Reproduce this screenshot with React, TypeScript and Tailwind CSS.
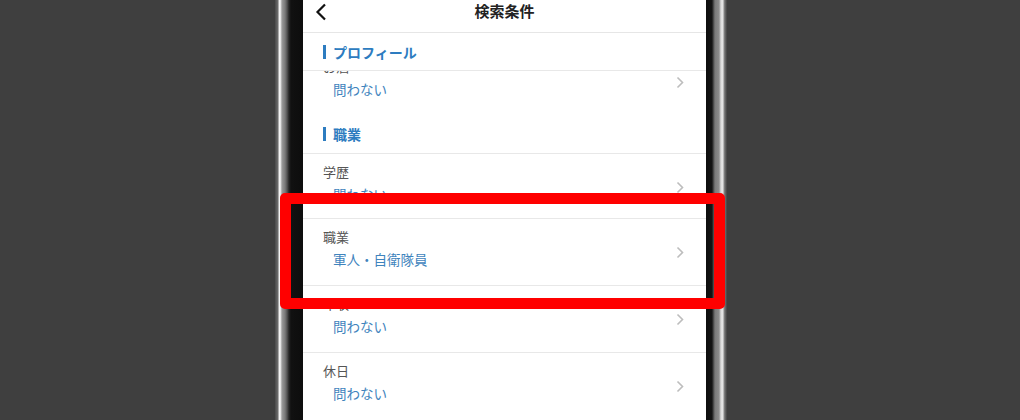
import React from 'react';

const font = { fontFamily: '"Noto Sans CJK JP", "Noto Sans", sans-serif' };

function Chevron() {
  return (
    <svg width="8" height="13" viewBox="0 0 8 13" className="shrink-0">
      <polyline points="1.5,1.5 6.5,6.5 1.5,11.5" fill="none" stroke="#bdbdbd" strokeWidth="1.6" />
    </svg>
  );
}

function Row({ label, value }: { label: string; value: string }) {
  return (
    <div className="h-[66px] flex items-start pl-[20px] pr-[22px]">
      <div className="flex-1 flex flex-col pt-[10px]">
        <span className="text-[13px] leading-[16px] text-[#555555]">{label}</span>
        <span className="mt-[5px] pl-[10px] text-[13.5px] leading-[18px] text-[#3f84bd]">{value}</span>
      </div>
      <div className="mt-[27px]">
        <Chevron />
      </div>
    </div>
  );
}

function SectionHeader({ title }: { title: string }) {
  return (
    <div className="h-[39px] shrink-0 flex items-center pl-[20px] border-b border-[#e8e8e8]">
      <div className="w-[3px] h-[14px] bg-[#2d7cc0] mr-[7px]" />
      <span className="text-[14px] font-bold text-[#2d7cc0] leading-none">{title}</span>
    </div>
  );
}

export default function App() {
  return (
    <div className="relative w-[1020px] h-[420px] bg-[#3f3f3f] overflow-hidden" style={font}>
      <div className="flex h-full ml-[275px]">
        <div className="w-[28px] h-full bg-[linear-gradient(to_right,#4a4a4a_0px,#6e6e6e_3px,#e8e8e8_4px,#ffffff_5px,#9a9a9a_7px,#7a7a7a_10px,#555555_12px,#262626_14px,#111111_16px,#0d0d0d_28px)]" />
        <div className="w-[403px] h-full bg-white flex flex-col">
          <div className="h-[33px] shrink-0 relative flex items-center justify-center border-b border-[#e6e6e6]">
            <svg width="12" height="18" viewBox="0 0 12 18" className="absolute left-[12px] top-[3px]">
              <polyline points="10,1.5 2.5,9 10,16.5" fill="none" stroke="#111111" strokeWidth="2.2" />
            </svg>
            <span className="text-[15px] font-bold text-[#222222] leading-none -mt-[11px]">検索条件</span>
          </div>
          <div className="h-[38px] shrink-0 flex items-center pl-[20px] border-b border-[#e8e8e8]">
            <div className="w-[3px] h-[14px] bg-[#2d7cc0] mr-[7px]" />
            <span className="text-[14px] font-bold text-[#2d7cc0] leading-none">プロフィール</span>
          </div>
          <div className="h-[44px] shrink-0 overflow-hidden">
            <div className="-mt-[22px]">
              <Row label="お酒" value="問わない" />
            </div>
          </div>
          <SectionHeader title="職業" />
          <div className="h-[65px] shrink-0 border-b border-[#e8e8e8]">
            <div className="h-[41px] overflow-hidden">
              <Row label="学歴" value="問わない" />
            </div>
          </div>
          <div className="shrink-0 border-b border-[#e8e8e8]">
            <Row label="職業" value="軍人・自衛隊員" />
          </div>
          <div className="shrink-0 border-b border-[#e8e8e8]">
            <Row label="年収" value="問わない" />
          </div>
          <div className="shrink-0">
            <Row label="休日" value="問わない" />
          </div>
        </div>
        <div className="w-[21px] h-full bg-[linear-gradient(to_right,#0d0d0d_0px,#141414_6px,#3a3a3a_7px,#7a7a7a_9px,#8c8c8c_13px,#dddddd_15px,#e6e6e6_17px,#8a8a8a_18px,#555555_20px,#444444_21px)]" />
      </div>
      <div className="absolute left-[280px] top-[193px] w-[445px] h-[116px] border-[11px] border-[#ff0000] rounded-[5px]" />
    </div>
  );
}
